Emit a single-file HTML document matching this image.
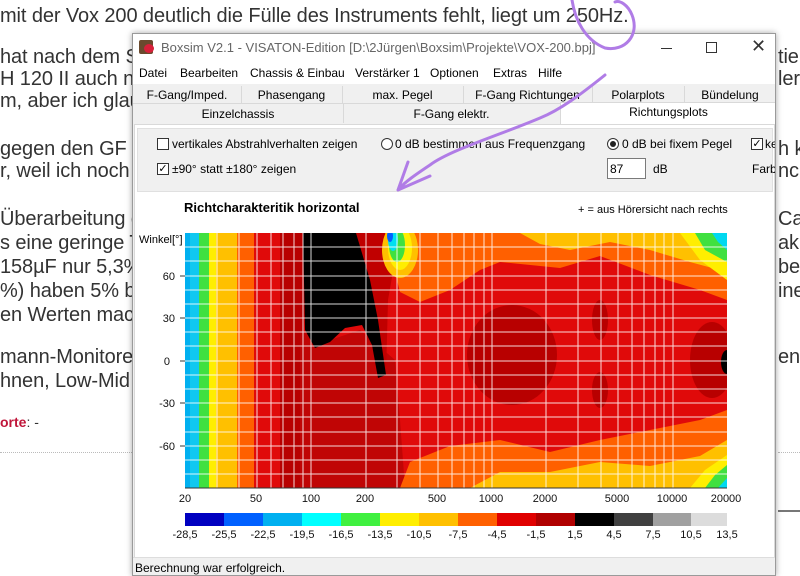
<!DOCTYPE html>
<html><head><meta charset="utf-8"><style>
*{margin:0;padding:0;box-sizing:border-box}
body{width:800px;height:576px;overflow:hidden;background:#fff;position:relative;font-family:"Liberation Sans",Arial,sans-serif}
.bt{position:absolute;font-size:20px;color:#333;white-space:nowrap;letter-spacing:-0.1px}
.w{position:absolute;font-size:12px;color:#000;white-space:nowrap}
#win{position:absolute;left:132px;top:33px;width:644px;height:543px;background:#f0f0f0;border:1px solid #9a9a9a;box-shadow:0 0 6px rgba(0,0,0,.35);overflow:hidden}
</style></head><body>
<div class="bt" style="left:0;top:5px">mit der Vox 200 deutlich die Fülle des Instruments fehlt, liegt um 250Hz.</div>
<div class="bt" style="left:0;top:46px">hat nach dem S</div>
<div class="bt" style="left:0;top:68px">H 120 II auch n</div>
<div class="bt" style="left:0;top:90px">m, aber ich glau</div>
<div class="bt" style="left:0;top:138px">gegen den GF</div>
<div class="bt" style="left:0;top:160px">r, weil ich noch</div>
<div class="bt" style="left:0;top:208px">Überarbeitung d</div>
<div class="bt" style="left:0;top:232px">s eine geringe T</div>
<div class="bt" style="left:0;top:256px">158µF nur 5,3%</div>
<div class="bt" style="left:0;top:280px">%) haben 5% b</div>
<div class="bt" style="left:0;top:304px">en Werten mac</div>
<div class="bt" style="left:0;top:346px">mann-Monitore</div>
<div class="bt" style="left:0;top:370px">hnen, Low-Mid au</div>
<div style="position:absolute;left:0;top:414px;font-size:14px;color:#c0163a;font-weight:bold">orte<span style="color:#333;font-weight:normal">: -</span></div>
<div style="position:absolute;left:0;top:452px;width:132px;border-top:1px dotted #bbb"></div>
<div class="bt" style="left:778px;top:46px">tie</div>
<div class="bt" style="left:778px;top:68px">ler</div>
<div class="bt" style="left:778px;top:138px">h k</div>
<div class="bt" style="left:778px;top:160px">nc</div>
<div class="bt" style="left:778px;top:208px">Cap</div>
<div class="bt" style="left:778px;top:232px">ak</div>
<div class="bt" style="left:778px;top:256px">be</div>
<div class="bt" style="left:778px;top:280px">ine</div>
<div class="bt" style="left:778px;top:346px">en,</div>
<div style="position:absolute;left:778px;top:452px;width:22px;border-top:1px dotted #bbb"></div>
<div style="position:absolute;left:778px;top:510px;width:22px;border-top:2px solid #777"></div>

<div id="win">
 <div style="position:absolute;left:0;top:0;width:644px;height:28px;background:#fff"></div>
 <div style="position:absolute;left:6px;top:6px;width:14px;height:14px;background:#6b4a2e;border-radius:2px"></div>
 <div style="position:absolute;left:11px;top:10px;width:10px;height:9px;background:#d8203a;border-radius:50%"></div>
 <div class="w" style="left:28px;top:6px;font-size:13px;color:#666">Boxsim V2.1 - VISATON-Edition [D:\2Jürgen\Boxsim\Projekte\VOX-200.bpj]</div>
 <div style="position:absolute;left:528px;top:14px;width:11px;border-top:1px solid #333"></div>
 <div style="position:absolute;left:573px;top:8px;width:11px;height:11px;border:1px solid #333"></div>
 <div class="w" style="left:618px;top:2px;font-size:18px;color:#333">✕</div>
 <div style="position:absolute;left:0;top:28px;width:644px;height:22px;background:#fff"></div>
 <div class="w" style="left:6px;top:32px">Datei</div>
 <div class="w" style="left:47px;top:32px">Bearbeiten</div>
 <div class="w" style="left:117px;top:32px">Chassis &amp; Einbau</div>
 <div class="w" style="left:222px;top:32px">Verstärker 1</div>
 <div class="w" style="left:297px;top:32px">Optionen</div>
 <div class="w" style="left:360px;top:32px">Extras</div>
 <div class="w" style="left:405px;top:32px">Hilfe</div>
 <div style="position:absolute;left:0;top:52px;width:644px;height:18px;border-bottom:1px solid #d9d9d9"></div>
 <div class="w" style="left:0;top:54px;width:108px;text-align:center">F-Gang/Imped.</div>
 <div class="w" style="left:108px;top:54px;width:101px;text-align:center">Phasengang</div>
 <div class="w" style="left:209px;top:54px;width:121px;text-align:center">max. Pegel</div>
 <div class="w" style="left:330px;top:54px;width:129px;text-align:center">F-Gang Richtungen</div>
 <div class="w" style="left:459px;top:54px;width:92px;text-align:center">Polarplots</div>
 <div class="w" style="left:551px;top:54px;width:92px;text-align:center">Bündelung</div>
 <div style="position:absolute;left:108px;top:52px;height:18px;border-left:1px solid #d9d9d9"></div>
 <div style="position:absolute;left:209px;top:52px;height:18px;border-left:1px solid #d9d9d9"></div>
 <div style="position:absolute;left:330px;top:52px;height:18px;border-left:1px solid #d9d9d9"></div>
 <div style="position:absolute;left:459px;top:52px;height:18px;border-left:1px solid #d9d9d9"></div>
 <div style="position:absolute;left:551px;top:52px;height:18px;border-left:1px solid #d9d9d9"></div>
 <div class="w" style="left:0;top:73px;width:210px;text-align:center">Einzelchassis</div>
 <div class="w" style="left:210px;top:73px;width:217px;text-align:center">F-Gang elektr.</div>
 <div style="position:absolute;left:210px;top:70px;height:19px;border-left:1px solid #d9d9d9"></div>
 <div style="position:absolute;left:427px;top:68px;width:217px;height:24px;background:#fff;border:1px solid #d9d9d9;border-bottom:none"></div>
 <div class="w" style="left:427px;top:71px;width:217px;text-align:center">Richtungsplots</div>
 <div style="position:absolute;left:1px;top:90px;width:641px;height:453px;background:#fff;border:1px solid #d9d9d9"></div>
 <div style="position:absolute;left:4px;top:94px;width:636px;height:64px;background:#f0f0f0;border:1px solid #e0e0e0"></div>
 <div style="position:absolute;left:24px;top:104px;width:12px;height:12px;border:1px solid #333;background:#fff"></div>
 <div class="w" style="left:39px;top:103px">vertikales Abstrahlverhalten zeigen</div>
 <div style="position:absolute;left:24px;top:129px;width:12px;height:12px;border:1px solid #333;background:#fff;font-size:11px;line-height:10px;text-align:center">✓</div>
 <div class="w" style="left:39px;top:128px">±90° statt ±180° zeigen</div>
 <div style="position:absolute;left:248px;top:104px;width:12px;height:12px;border:1px solid #333;border-radius:50%;background:#fff"></div>
 <div class="w" style="left:262px;top:103px">0 dB bestimmen aus Frequenzgang</div>
 <div style="position:absolute;left:474px;top:104px;width:12px;height:12px;border:1px solid #333;border-radius:50%;background:#fff"></div>
 <div style="position:absolute;left:477px;top:107px;width:6px;height:6px;border-radius:50%;background:#222"></div>
 <div class="w" style="left:489px;top:103px">0 dB bei fixem Pegel</div>
 <div style="position:absolute;left:618px;top:104px;width:12px;height:12px;border:1px solid #333;background:#fff;font-size:11px;line-height:10px;text-align:center">✓</div>
 <div class="w" style="left:632px;top:103px">ke</div>
 <div style="position:absolute;left:474px;top:124px;width:39px;height:21px;border:1px solid #7a7a7a;background:#fff"></div>
 <div class="w" style="left:477px;top:128px">87</div>
 <div class="w" style="left:520px;top:128px">dB</div>
 <div class="w" style="left:619px;top:128px">Farb</div>
 <div class="w" style="left:51px;top:166px;font-size:13px;font-weight:bold">Richtcharakteritik horizontal</div>
 <div class="w" style="left:445px;top:170px;font-size:11px">+ = aus Hörersicht nach rechts</div>
 <div class="w" style="left:6px;top:200px;font-size:11px">Winkel[°]</div>
 <div style="position:absolute;left:0;top:523px;width:644px;height:20px;background:#f0f0f0;border-top:1px solid #ddd"></div>
 <div class="w" style="left:2px;top:527px">Berechnung war erfolgreich.</div>
</div>

<svg width="800" height="576" style="position:absolute;left:0;top:0" xmlns="http://www.w3.org/2000/svg">
<defs><clipPath id="c"><rect x="185" y="233" width="542" height="255"/></clipPath></defs>
<g clip-path="url(#c)">
<rect x="185" y="233" width="542" height="255" fill="#e00a0a"/>
<rect x="185" y="233" width="10" height="255" fill="#00b0f0"/>
<rect x="190" y="233" width="9" height="255" fill="#10c8f0"/>
<rect x="199" y="233" width="10" height="255" fill="#40e040"/>
<rect x="209" y="233" width="8" height="255" fill="#ffee00"/>
<rect x="216" y="233" width="21" height="255" fill="#ffc000"/>
<rect x="237" y="233" width="17" height="255" fill="#ff6000"/>
<rect x="280" y="233" width="24" height="255" fill="#b80000"/>
<polygon points="300,330 330,340 360,330 395,360 400,420 405,488 300,488" fill="#c00505"/>
<polygon points="356,233 385,233 395,260 388,300 386,375 372,330" fill="#c00000"/>
<polygon points="303,233 356,233 370,280 378,320 386,375 378,378 372,345 362,325 345,328 330,342 315,348 305,330" fill="#000"/>
<polygon points="385,233 727,233 727,300 700,290 650,275 600,256 560,268 500,262 480,270 450,290 420,302 400,292" fill="#ff6000"/>
<polygon points="520,233 727,233 727,272 690,262 650,250 610,242 570,250 540,244" fill="#ffc000"/>
<ellipse cx="400" cy="250" rx="18" ry="28" fill="#ffc000"/>
<ellipse cx="400" cy="248" rx="12" ry="22" fill="#ffee00"/>
<ellipse cx="397" cy="245" rx="8" ry="17" fill="#40e040"/>
<ellipse cx="393" cy="240" rx="5" ry="11" fill="#00e0f0"/>
<ellipse cx="390" cy="236" rx="3" ry="6" fill="#0060ff"/>
<polygon points="680,233 727,233 727,280 700,260" fill="#ffee00"/>
<polygon points="695,233 727,233 727,262 705,250" fill="#40e040"/>
<polygon points="712,233 727,233 727,250 718,242" fill="#00d8f0"/>
<polygon points="400,488 410,462 450,446 500,440 550,452 600,440 650,430 700,420 727,410 727,488" fill="#ff6000"/>
<polygon points="470,488 500,472 550,472 600,462 650,466 700,456 727,440 727,488" fill="#ffc000"/>
<polygon points="690,488 705,470 727,455 727,488" fill="#ffee00"/>
<polygon points="705,488 715,475 727,465 727,488" fill="#40e040"/>
<polygon points="718,488 727,478 727,488" fill="#00d8f0"/>
<ellipse cx="512" cy="355" rx="45" ry="50" fill="#b80000"/>
<ellipse cx="600" cy="320" rx="8" ry="20" fill="#b80000"/>
<ellipse cx="600" cy="390" rx="8" ry="18" fill="#b80000"/>
<ellipse cx="712" cy="360" rx="22" ry="38" fill="#b80000"/>
<ellipse cx="727" cy="362" rx="6" ry="12" fill="#000"/>
<g stroke="#fff" stroke-width="1" opacity="0.85">
<line x1="217" y1="233" x2="217" y2="488"/><line x1="239" y1="233" x2="239" y2="488"/><line x1="257" y1="233" x2="257" y2="488"/><line x1="271" y1="233" x2="271" y2="488"/><line x1="283" y1="233" x2="283" y2="488"/><line x1="294" y1="233" x2="294" y2="488"/><line x1="303" y1="233" x2="303" y2="488"/><line x1="311" y1="233" x2="311" y2="488"/><line x1="366" y1="233" x2="366" y2="488"/><line x1="397" y1="233" x2="397" y2="488"/><line x1="420" y1="233" x2="420" y2="488"/><line x1="438" y1="233" x2="438" y2="488"/><line x1="452" y1="233" x2="452" y2="488"/><line x1="464" y1="233" x2="464" y2="488"/><line x1="474" y1="233" x2="474" y2="488"/><line x1="484" y1="233" x2="484" y2="488"/><line x1="492" y1="233" x2="492" y2="488"/><line x1="546" y1="233" x2="546" y2="488"/><line x1="578" y1="233" x2="578" y2="488"/><line x1="601" y1="233" x2="601" y2="488"/><line x1="618" y1="233" x2="618" y2="488"/><line x1="632" y1="233" x2="632" y2="488"/><line x1="644" y1="233" x2="644" y2="488"/><line x1="655" y1="233" x2="655" y2="488"/><line x1="664" y1="233" x2="664" y2="488"/><line x1="673" y1="233" x2="673" y2="488"/>
<line x1="185" y1="247" x2="727" y2="247"/><line x1="185" y1="261" x2="727" y2="261"/><line x1="185" y1="276" x2="727" y2="276"/><line x1="185" y1="290" x2="727" y2="290"/><line x1="185" y1="304" x2="727" y2="304"/><line x1="185" y1="318" x2="727" y2="318"/><line x1="185" y1="332" x2="727" y2="332"/><line x1="185" y1="346" x2="727" y2="346"/><line x1="185" y1="361" x2="727" y2="361"/><line x1="185" y1="375" x2="727" y2="375"/><line x1="185" y1="389" x2="727" y2="389"/><line x1="185" y1="403" x2="727" y2="403"/><line x1="185" y1="417" x2="727" y2="417"/><line x1="185" y1="432" x2="727" y2="432"/><line x1="185" y1="446" x2="727" y2="446"/><line x1="185" y1="460" x2="727" y2="460"/><line x1="185" y1="474" x2="727" y2="474"/>
</g></g>
<g stroke="#333"><line x1="180" y1="276" x2="185" y2="276"/><line x1="180" y1="318" x2="185" y2="318"/><line x1="180" y1="361" x2="185" y2="361"/><line x1="180" y1="403" x2="185" y2="403"/><line x1="180" y1="446" x2="185" y2="446"/><line x1="185" y1="488" x2="727" y2="488"/></g>
<g font-family="Liberation Sans,sans-serif" font-size="11" fill="#111" text-anchor="end">
<text x="175" y="280">60</text><text x="175" y="322">30</text><text x="170" y="365">0</text><text x="175" y="407">-30</text><text x="175" y="450">-60</text></g>
<g font-family="Liberation Sans,sans-serif" font-size="11" fill="#111" text-anchor="middle">
<text x="185" y="502">20</text><text x="256" y="502">50</text><text x="311" y="502">100</text><text x="365" y="502">200</text><text x="437" y="502">500</text><text x="491" y="502">1000</text><text x="545" y="502">2000</text><text x="617" y="502">5000</text><text x="672" y="502">10000</text><text x="726" y="502">20000</text></g>
<g>
<rect x="185" y="513" width="39" height="13" fill="#0000c0"/><rect x="224" y="513" width="39" height="13" fill="#0060ff"/><rect x="263" y="513" width="39" height="13" fill="#00b0f0"/><rect x="302" y="513" width="39" height="13" fill="#00ffff"/><rect x="341" y="513" width="39" height="13" fill="#40f040"/><rect x="380" y="513" width="39" height="13" fill="#ffee00"/><rect x="419" y="513" width="39" height="13" fill="#ffc000"/><rect x="458" y="513" width="39" height="13" fill="#ff6000"/><rect x="497" y="513" width="39" height="13" fill="#e00000"/><rect x="536" y="513" width="39" height="13" fill="#b00000"/><rect x="575" y="513" width="39" height="13" fill="#000"/><rect x="614" y="513" width="39" height="13" fill="#404040"/><rect x="653" y="513" width="38" height="13" fill="#a0a0a0"/><rect x="691" y="513" width="36" height="13" fill="#dcdcdc"/></g>
<g font-family="Liberation Sans,sans-serif" font-size="11" fill="#111" text-anchor="middle">
<text x="185" y="538">-28,5</text><text x="224" y="538">-25,5</text><text x="263" y="538">-22,5</text><text x="302" y="538">-19,5</text><text x="341" y="538">-16,5</text><text x="380" y="538">-13,5</text><text x="419" y="538">-10,5</text><text x="458" y="538">-7,5</text><text x="497" y="538">-4,5</text><text x="536" y="538">-1,5</text><text x="575" y="538">1,5</text><text x="614" y="538">4,5</text><text x="653" y="538">7,5</text><text x="691" y="538">10,5</text><text x="727" y="538">13,5</text></g>
<path d="M572,0 C575,20 585,40 605,48 C625,52 640,35 632,15 C628,5 620,0 615,2 M605,75 C580,95 560,110 540,118 C500,135 450,150 430,165 C415,175 405,182 400,188 M398,190 L408,162 M398,190 L430,176" fill="none" stroke="#b07ce6" stroke-width="3" stroke-linecap="round"/>
</svg>
</body></html>
